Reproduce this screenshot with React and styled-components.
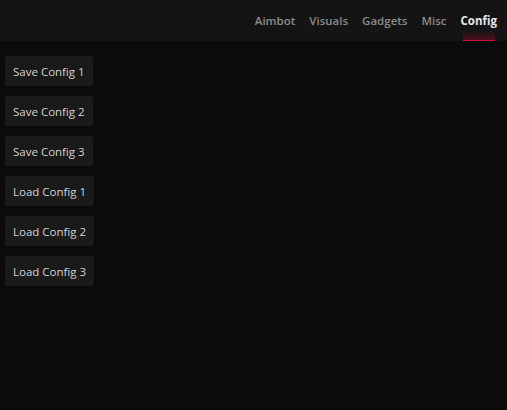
import { useState } from "react";
import styled, { createGlobalStyle } from "styled-components";

const TABS = ["Aimbot", "Visuals", "Gadgets", "Misc", "Config"];
const ACTIONS = [
  "Save Config 1",
  "Save Config 2",
  "Save Config 3",
  "Load Config 1",
  "Load Config 2",
  "Load Config 3",
];

const App = () => {
  const [activeTab, setActiveTab] = useState("Config");

  return (
    <>
      <GlobalStyle />
      <Page>
        <Header>
          <TabList>
            {TABS.map((tab) => (
              <Tab
                key={tab}
                $active={tab === activeTab}
                onClick={() => setActiveTab(tab)}
              >
                {tab}
              </Tab>
            ))}
          </TabList>
        </Header>
        <ConfigList>
          {ACTIONS.map((label) => (
            <ConfigBtn key={label}>{label}</ConfigBtn>
          ))}
        </ConfigList>
      </Page>
    </>
  );
};

export default App;

const GlobalStyle = createGlobalStyle`
  html, body {
    margin: 0;
    background: #0b0b0b;
  }
  body {
    font-family: "Open Sans", "Noto Sans", sans-serif;
  }
`;

const Page = styled.div`
  width: 507px;
  height: 410px;
  background: #0b0b0b;
  display: flex;
  flex-direction: column;
`;

const Header = styled.div`
  height: 41px;
  background: #141414;
  display: flex;
  justify-content: flex-end;
  padding-right: 10px;
`;

const TabList = styled.div`
  display: flex;
  gap: 14px;
`;

const Tab = styled.div`
  position: relative;
  display: flex;
  align-items: center;
  font-size: 11.5px;
  font-weight: ${(p) => (p.$active ? 700 : 600)};
  color: ${(p) => (p.$active ? "#e6e6e6" : "#8a8a8a")};
  cursor: pointer;

  &::after {
    content: "";
    display: ${(p) => (p.$active ? "block" : "none")};
    position: absolute;
    left: 2px;
    right: 2px;
    bottom: 0;
    height: 10px;
    background: linear-gradient(to bottom, rgba(120, 10, 40, 0) 0%, rgba(120, 10, 40, 0.55) 100%);
    border-bottom: 1px solid #c4143f;
  }
`;

const ConfigList = styled.div`
  display: flex;
  flex-direction: column;
  align-items: flex-start;
  gap: 10px;
  padding: 15px 5px;
`;

const ConfigBtn = styled.button`
  height: 30px;
  padding: 0 8px;
  border: none;
  border-radius: 3px;
  background: #1a1a1a;
  color: #d2d2d2;
  font-family: "Open Sans", "Noto Sans", sans-serif;
  font-size: 11.5px;
  cursor: pointer;
`;
